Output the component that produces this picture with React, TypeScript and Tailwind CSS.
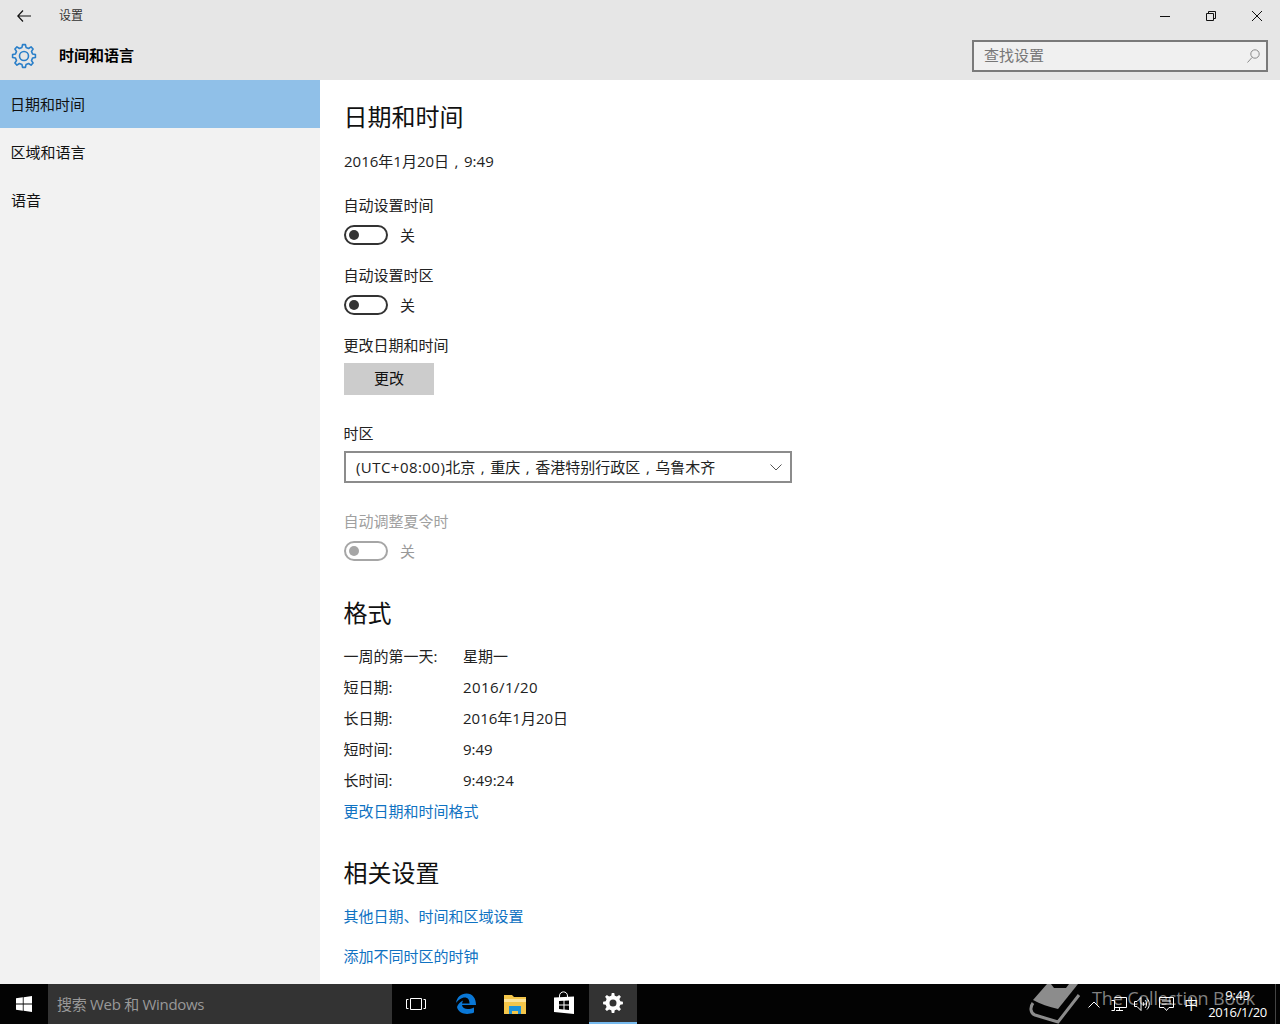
const font = 'font-["Open_Sans","Noto_Sans_CJK_SC",sans-serif]';

// 8 tooth gear outline, used for the header icon and the taskbar tile
function gearPath(c: number, outer: number, inner: number) {
  const pts: string[] = [];
  const teeth = 8;
  for (let i = 0; i < teeth; i++) {
    const a = (i / teeth) * Math.PI * 2;
    const step = (Math.PI * 2) / teeth;
    const at = (r: number, t: number) => `${(c + r * Math.cos(t)).toFixed(2)} ${(c + r * Math.sin(t)).toFixed(2)}`;
    pts.push(`${i === 0 ? 'M' : 'L'}${at(inner, a - step * 0.3)}`);
    pts.push(`L${at(outer, a - step * 0.16)}`);
    pts.push(`L${at(outer, a + step * 0.16)}`);
    pts.push(`L${at(inner, a + step * 0.3)}`);
  }
  return pts.join(' ') + 'Z';
}

function Comma() {
  return <span className="inline-block w-[15px] text-center">,</span>;
}

function Toggle({ disabled = false }: { disabled?: boolean }) {
  return (
    <div className={`mt-[10px] flex h-5 items-center ${disabled ? 'text-[#999999]' : 'text-[#222222]'}`}>
      <div className={`flex h-5 w-11 items-center rounded-full border-2 pl-[3px] ${disabled ? 'border-[#a6a6a6]' : 'border-[#333333]'}`}>
        <div className={`h-[10px] w-[10px] rounded-full ${disabled ? 'bg-[#a6a6a6]' : 'bg-[#333333]'}`} />
      </div>
      <span className="ml-3 text-[15px] leading-5">关</span>
    </div>
  );
}

function Row({ label, value, wide = false }: { label: string; value: string; wide?: boolean }) {
  return (
    <div className="flex h-5 text-[15px] leading-5 text-[#222222]">
      <span className="-ml-[0.5px] w-[119.500px]">{label}</span>
      <span className={wide ? 'tracking-[0.45px]' : ''}>{value}</span>
    </div>
  );
}

function TitleBar() {
  return (
    <header className="h-20 shrink-0 bg-[#e6e6e6]">
      <div className="flex h-8 items-center">
        <svg className="ml-[17px]" width="14" height="12" viewBox="0 0 14 12" fill="none" stroke="#111111" strokeWidth="1.200">
          <path d="M6 .5.8 6 6 11.500M1 6h13" />
        </svg>
        <span className="ml-[28px] text-xs text-[#333333]">设置</span>
        <div className="ml-auto flex items-center">
          <div className="mr-[35px] h-px w-[10px] bg-[#111111]" />
          <svg className="mr-[35px] h-[12px] w-[12px] text-[#111111]" viewBox="0 0 12 12" fill="none" stroke="currentColor">
            <path d="M1.500 3.500h7v7h-7z M3.500 3.500v-2h7v7h-2" />
          </svg>
          <svg className="mr-[18px]" width="10" height="10" viewBox="0 0 10 10" fill="none" stroke="#111111">
            <path d="M0 0 10 10M10 0 0 10" />
          </svg>
        </div>
      </div>
      <div className="flex h-12 items-start">
        <div className="flex h-12 items-center">
          <svg className="ml-[11px]" width="26" height="26" viewBox="0 0 26 26" fill="none" stroke="#2a7fc9" strokeWidth="1.600" strokeLinejoin="round">
            <path d={gearPath(13, 11.500, 8.800)} />
            <circle cx="13" cy="13" r="4.500" />
          </svg>
          <span className="ml-[22px] -translate-y-[1px] text-[15px] font-bold text-black">时间和语言</span>
        </div>
        <div className="ml-auto mr-3 mt-2 flex h-8 w-[296px] items-center border-2 border-[#7a7a7a] bg-[#f0f0f0] pl-[10px] pr-[6px]">
          <span className="-translate-y-[1px] text-[15px] text-[#777777]">查找设置</span>
          <svg className="ml-auto" width="13" height="14" viewBox="0 0 13 14" fill="none" stroke="#8a8a8a">
            <circle cx="8" cy="5" r="4.200" />
            <path d="M5 8.500 .5 13.500" />
          </svg>
        </div>
      </div>
    </header>
  );
}

function Sidebar() {
  return (
    <nav className="w-80 shrink-0 bg-[#f2f2f2] text-[15px] text-[#111111]">
      <div className="flex h-12 items-center bg-[#90c0e8] pl-[10px]">日期和时间</div>
      <div className="flex h-12 items-center pl-[10.500px]">区域和语言</div>
      <div className="flex h-12 items-center pl-[11px]">语音</div>
    </nav>
  );
}

function Content() {
  const label = '-ml-[0.5px] h-5 text-[15px] leading-5 text-[#222222]';
  const heading = '-ml-[0.5px] mt-[35px] h-9 text-2xl leading-[34px] text-[#111111]';
  const link = '-ml-[0.5px] h-5 text-[15px] leading-5 text-[#0f72c2]';
  return (
    <main className="flex-1 overflow-hidden bg-white pl-6 pt-5">
      <h1 className="-ml-[0.5px] h-9 text-2xl leading-[34px] text-[#111111]">日期和时间</h1>
      <p className="mt-[15px] h-5 text-[15px] leading-5 text-[#222222]">
        2016年1月20日<Comma />9:49
      </p>
      <p className={`mt-6 ${label}`}>自动设置时间</p>
      <Toggle />
      <p className={`mt-5 ${label}`}>自动设置时区</p>
      <Toggle />
      <p className={`mt-5 ${label}`}>更改日期和时间</p>
      <button className="mt-2 flex h-8 w-[90px] items-center justify-center bg-[#cccccc] pb-[1px] text-[15px] text-[#111111]">更改</button>
      <p className={`mt-7 ${label}`}>时区</p>
      <div className="mt-2 flex h-8 w-[448px] items-center border-2 border-[#8c8c8c] pl-[10px] pr-[8px] text-[15px] text-[#222222]">
        <span>
          <span className="tracking-[0.45px]">(UTC+08:00)</span>北京<Comma />重庆<Comma />香港特别行政区<Comma />乌鲁木齐
        </span>
        <svg className="ml-auto" width="12" height="7" viewBox="0 0 12 7" fill="none" stroke="#555555">
          <path d="M.5 .5 6 6 11.500 .5" />
        </svg>
      </div>
      <p className="-ml-[0.5px] mt-7 h-5 text-[15px] leading-5 text-[#a0a0a0]">自动调整夏令时</p>
      <Toggle disabled />
      <h2 className={heading}>格式</h2>
      <div className="mt-[14px] flex flex-col gap-[11px]">
        <Row label="一周的第一天:" value="星期一" />
        <Row label="短日期:" value="2016/1/20" wide />
        <Row label="长日期:" value="2016年1月20日" />
        <Row label="短时间:" value="9:49" />
        <Row label="长时间:" value="9:49:24" />
        <p className={link}>更改日期和时间格式</p>
      </div>
      <h2 className={heading}>相关设置</h2>
      <p className={`mt-[14px] ${link}`}>其他日期、时间和区域设置</p>
      <p className={`mt-5 ${link}`}>添加不同时区的时钟</p>
    </main>
  );
}

function Taskbar() {
  return (
    <footer className="relative flex h-10 shrink-0 items-center overflow-hidden bg-[#030303] text-white">
      <div className="flex w-12 justify-center">
        <svg width="16" height="16" viewBox="0 0 16 16" fill="white">
          <path d="M0 2.300 6.800 1.300V7.600H0z M7.600 1.200 16 0V7.600H7.600z M0 8.400H6.800V14.700L0 13.700z M7.600 8.400H16V16L7.600 14.800z" />
        </svg>
      </div>
      <div className="flex h-10 w-[344px] items-center bg-[#333333] pl-[9px] text-[15px] tracking-[-0.3px] text-[#999999]">搜索 Web 和 Windows</div>
      <div className="flex h-10 w-12 items-center justify-center">
        <svg width="20" height="14" viewBox="0 0 20 14" fill="none" stroke="white">
          <path d="M4.500 1.500h11v11h-11z M2.500 2.500h-2v9h2 M17.500 2.500h2v9h-2" />
        </svg>
      </div>
      <div className="flex h-10 w-[52px] items-center justify-center">
        <svg width="22" height="22" viewBox="0 0 22 22">
          <path fill="#0a78d7" d="M1 10C2 4 6 .5 11.500 .5 17.500 .5 21 5 21 12H7C7.500 16 13 17.500 19 14.500V19.500C12 22.500 3.500 21 2 14 3 11 5 9 8 7.500 7.500 9 7.300 9.500 7 10.500H14.500C14.500 6.500 12.500 4.500 10 4.500 6.500 4.500 3 7 1 10Z" />
        </svg>
      </div>
      <div className="flex h-10 w-[46px] items-center justify-center">
        <svg width="22" height="19" viewBox="0 0 22 19">
          <path fill="#f4c64a" d="M0 0h8l2 2h12v17H0z" />
          <path fill="#fbe39a" d="M0 4h22v3H0z" />
          <path fill="#1d93d8" d="M5 19v-8h12v8h-3v-3H8v3z" />
        </svg>
      </div>
      <div className="flex h-10 w-[51px] items-center justify-center">
        <svg className="-translate-y-[1px]" width="22" height="24" viewBox="0 0 22 24">
          <path fill="none" stroke="white" d="M6.500 7V5C6.500 -.5 14.500 -.5 14.500 5V7" />
          <path fill="white" d="M1 6.500 21 5.500V23L1 21z" />
          <path fill="#030303" d="M6 10 10.500 9.700V13.500H6z M11.500 9.700 16 9.400V13.500H11.500z M6 14.500H10.500V18.500L6 18.100z M11.500 14.500H16V19L11.500 18.600z" />
        </svg>
      </div>
      <div className="flex h-10 w-12 items-center justify-center border-b-2 border-[#76b9ed] bg-[#333333]">
        <svg width="20" height="20" viewBox="0 0 20 20">
          <path fill="white" fillRule="evenodd" d={`${gearPath(10, 10, 7.500)} M10 6.500a3.500 3.500 0 1 0 0 7a3.500 3.500 0 1 0 0-7z`} />
        </svg>
      </div>

      {/* watermark over the tray */}
      <svg className="absolute left-[1025px] top-0" width="60" height="40" viewBox="0 0 60 40">
        <path fill="#8c8c8c" d="M22 0H53L33 25C24 23 15 20 8 16Z" />
        <path fill="#030303" d="M26 0H44L41 4H29Z" />
        <path fill="none" stroke="#8c8c8c" strokeWidth="3" d="M8 19C5 23 5 29 10 31L33 38 54 11" />
      </svg>
      <span className="absolute left-[1092px] top-[4px] whitespace-nowrap text-[18px] leading-5 tracking-[-0.15px] text-[#808080]">The Collection Book</span>

      <div className="absolute right-[13px] top-0 flex h-10 items-center">
        <svg className="mr-[11px]" width="12" height="7" viewBox="0 0 12 7" fill="none" stroke="white">
          <path d="M.5 6.500 6 1l5.500 5.500" />
        </svg>
        <svg className="mr-[7px]" width="16" height="16" viewBox="0 0 16 16" fill="none" stroke="white">
          <path d="M3.500 1.500h12v10h-12 M.5 4.500h3v10h-3 M5 14.500h7 M8.500 11.500v3" />
        </svg>
        <svg className="mr-[9px]" width="16" height="16" viewBox="0 0 16 16" fill="none" stroke="white">
          <path d="M.5 5.500h2.500l4-4v13l-4-4H.5z M9 6c1 1 1 3 0 4 M11 4c2 2 2 6 0 8 M13 2.500c3 3 3 8 0 11" />
        </svg>
        <svg className="mr-[10px]" width="15" height="16" viewBox="0 0 15 16" fill="none" stroke="white">
          <path d="M.5 1.500h14v10h-4.500l-2.500 3-2.500-3H.5z M3 5h9M3 8h9" />
        </svg>
        <span className="mr-[10px] w-[14px] text-[14px] leading-4">中</span>
        <div className="flex flex-col items-center text-[13px] leading-4 tracking-[-0.3px]">
          <span className="-translate-y-[1px]">9:49</span>
          <span>2016/1/20</span>
        </div>
      </div>
      <div className="absolute right-[4px] top-0 h-10 w-px bg-[#444444]" />
    </footer>
  );
}

export default function App() {
  return (
    <div className={`flex h-[1024px] w-[1280px] flex-col overflow-hidden ${font}`}>
      <TitleBar />
      <div className="flex min-h-0 flex-1">
        <Sidebar />
        <Content />
      </div>
      <Taskbar />
    </div>
  );
}
